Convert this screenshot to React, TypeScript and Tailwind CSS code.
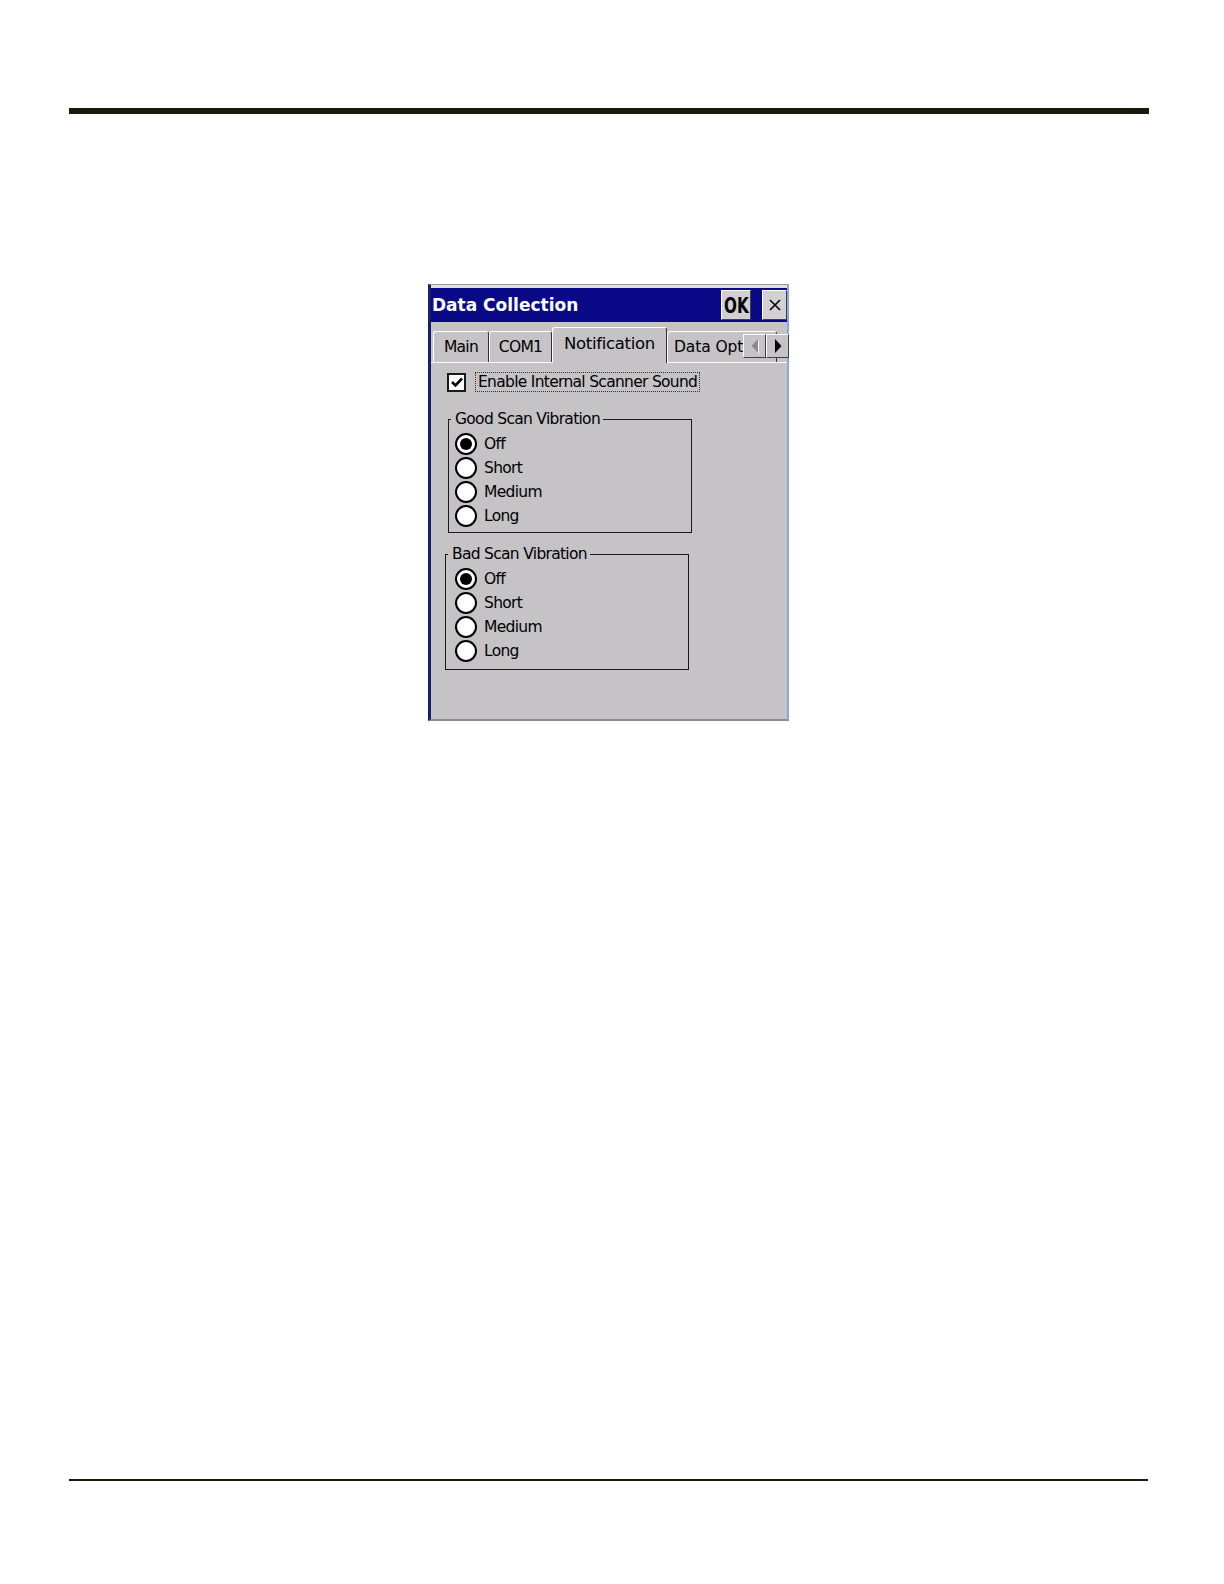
import React from 'react';

const raised = 'border border-t-white border-l-white border-r-[#404040] border-b-[#404040]';

function Tab({ label, className }: { label: string; className: string }) {
  return (
    <div className={`flex h-[31px] items-center rounded-t-[3px] border-l border-t border-r border-l-white border-t-white border-r-[#303030] text-[15.5px] leading-[18px] text-black ${className}`}>
      {label}
    </div>
  );
}

function Radio({ label, checked }: { label: string; checked?: boolean }) {
  return (
    <div className="flex h-[24px] items-center gap-[7px]">
      <div className="flex h-[22px] w-[22px] items-center justify-center rounded-full border-2 border-black bg-white">
        {checked && <div className="h-[12px] w-[12px] rounded-full bg-black" />}
      </div>
      <span className="text-[15.5px] leading-[18px] tracking-[-0.7px] text-black">{label}</span>
    </div>
  );
}

function Group({ title, className, innerClass }: { title: string; className: string; innerClass: string }) {
  return (
    <fieldset className={`w-[244px] border border-[#1a1a1a] ${className}`}>
      <legend className="ml-[2px] pl-[4px] pr-[3px] text-[15.5px] leading-[18px] tracking-[-0.7px] text-black">{title}</legend>
      <div className={innerClass}>
        <Radio label="Off" checked />
        <Radio label="Short" />
        <Radio label="Medium" />
        <Radio label="Long" />
      </div>
    </fieldset>
  );
}

export default function App() {
  return (
    <div className="min-h-[1584px] w-[1224px] bg-white pt-[108px] font-['DejaVu_Sans',sans-serif]">
      <div className="ml-[69px] h-[6px] w-[1080px] bg-[#1a1a0c]" />

      <div className="ml-[428px] mt-[170px] flex h-[437px] w-[361px] flex-col border-l-[3px] border-r-[2px] border-b-[2px] border-t border-l-[#16206a] border-r-[#8aa6e0] border-b-[#8c8c8c] border-t-[#9a9a9a] bg-[#c5c3c6]">
        <div className="h-[3px] bg-[#e0e0e0]" />

        {/* title bar */}
        <div className="flex h-[34px] items-center bg-[#0a0a88] pl-[1px]">
          <span className="text-[17px] font-bold leading-[20px] text-white">Data Collection</span>
          <div className={`ml-auto flex h-[30px] w-[30px] items-center justify-center bg-[#d2d0d2] ${raised}`}>
            <span className="scale-x-[0.8] scale-y-[1.1] text-[19px] font-bold leading-[20px] text-black">OK</span>
          </div>
          <div className={`ml-[11px] flex h-[30px] w-[25px] items-center justify-center bg-[#d2d0d2] ${raised}`}>
            <svg width="14" height="14" viewBox="0 0 14 14">
              <path d="M2 2 L12 12 M12 2 L2 12" stroke="#000" strokeWidth="1.6" />
            </svg>
          </div>
        </div>

        {/* tabs */}
        <div className="relative flex h-[41px] items-end border-b border-white pl-[2px]">
          <Tab label="Main" className="w-[56px] justify-center tracking-[-0.7px]" />
          <Tab label="COM1" className="w-[63px] justify-center tracking-[-0.7px]" />
          <div className="relative z-10 -mb-px flex h-[36px] w-[115px] items-center justify-center rounded-t-[3px] border-l border-t border-r border-l-white border-t-white border-r-[#303030] bg-[#c5c3c6] pb-[3px] text-[16.5px] leading-[18px] tracking-[-0.3px] text-black">
            Notification
          </div>
          <Tab label="Data Options" className="w-[110px] justify-start overflow-hidden whitespace-nowrap pl-[6px] tracking-[-0.1px]" />
          <div className="absolute right-[-2px] top-[12px] z-20 flex">
            <div className={`flex h-[24px] w-[23px] items-center justify-center bg-[#c5c3c6] ${raised}`}>
              <svg width="10" height="16" viewBox="0 0 10 16">
                <path d="M8 1 L1.5 8 L8 15 Z" fill="#ffffff" transform="translate(1 1)" />
                <path d="M8 1 L1.5 8 L8 15 Z" fill="#8a8a8a" />
              </svg>
            </div>
            <div className={`flex h-[24px] w-[23px] items-center justify-center bg-[#c5c3c6] ${raised}`}>
              <svg width="10" height="16" viewBox="0 0 10 16">
                <path d="M2 1 L8.5 8 L2 15 Z" fill="#000000" />
              </svg>
            </div>
          </div>
        </div>

        {/* content */}
        <div className="flex-1 pl-[16px] pt-[9px]">
          <div className="flex items-center gap-[9px]">
            <div className="flex h-[19px] w-[19px] items-center justify-center border-2 border-[#1a1a1a] bg-white">
              <svg width="14" height="14" viewBox="0 0 14 14">
                <path d="M2 7 L5.5 10.5 L12 3.5" fill="none" stroke="#000" strokeWidth="2.6" />
              </svg>
            </div>
            <div className="flex h-[20px] items-center border border-dotted border-[#303030] px-[2px] text-[15.5px] leading-[18px] tracking-[-0.7px] text-black">
              Enable Internal Scanner Sound
            </div>
          </div>

          <Group title="Good Scan Vibration" className="ml-[1px] mt-[18px]" innerClass="pb-[4px] pl-[6px] pt-[4px]" />
          <Group title="Bad Scan Vibration" className="-ml-[2px] mt-[12px]" innerClass="pb-[6px] pl-[9px] pt-[4px]" />
        </div>
      </div>

      <div className="ml-[69px] mt-[758px] h-[2px] w-[1079px] bg-[#1a1a0c]" />
    </div>
  );
}
